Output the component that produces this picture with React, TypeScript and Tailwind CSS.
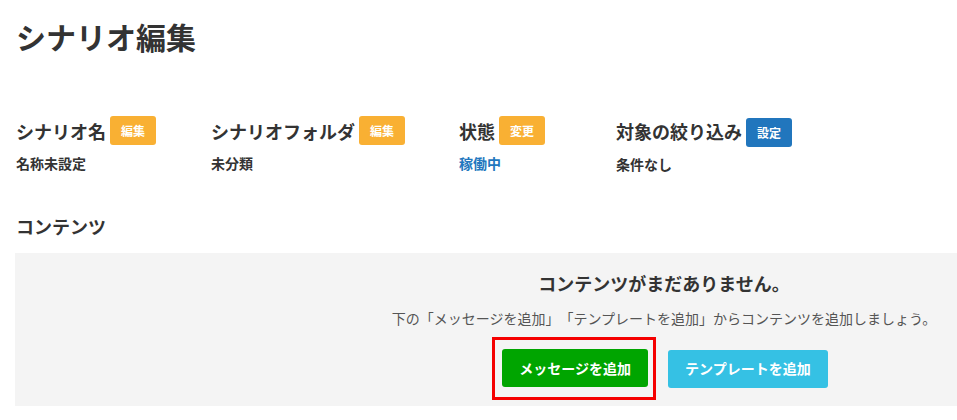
import React from "react";

const font = { fontFamily: '"Noto Sans CJK JP", "Noto Sans", sans-serif' };

function Badge({ label, color, className = "" }: { label: string; color: string; className?: string }) {
  return (
    <span
      className={`inline-flex items-center justify-center w-[46px] h-[29px] rounded-[3px] text-[12px] font-bold text-white ${color} ${className}`}
    >
      {label}
    </span>
  );
}

function Field({
  title,
  badge,
  badgeColor,
  value,
  valueClass,
  width,
  badgeClass = "",
}: {
  title: string;
  badge: string;
  badgeColor: string;
  value: string;
  valueClass: string;
  width: string;
  badgeClass?: string;
}) {
  return (
    <div className={`${width} shrink-0 flex flex-col`}>
      <div className="flex items-center gap-[4px] h-[29px]">
        <span className="text-[18px] font-bold text-[#333] leading-none">{title}</span>
        <Badge label={badge} color={badgeColor} className={badgeClass} />
      </div>
      <div className={`text-[14px] font-bold leading-[20px] ${valueClass}`}>{value}</div>
    </div>
  );
}

export default function App() {
  return (
    <div className="w-[957px] h-[420px] overflow-hidden bg-white" style={font}>
      <div className="pl-[16px]">
        <h1 className="pt-[19px] text-[30px] font-bold leading-[34px] text-[#333]">シナリオ編集</h1>

        <div className="mt-[63px] flex">
          <Field title="シナリオ名" badge="編集" badgeColor="bg-[#f9b033]" value="名称未設定" valueClass="mt-[8px] text-[#333]" width="w-[195px]" />
          <Field title="シナリオフォルダ" badge="編集" badgeColor="bg-[#f9b033]" value="未分類" valueClass="mt-[8px] text-[#333]" width="w-[248px]" />
          <Field title="状態" badge="変更" badgeColor="bg-[#f9b033]" value="稼働中" valueClass="mt-[8px] text-[#2277be]" width="w-[157px]" />
          <Field
            title="対象の絞り込み"
            badge="設定"
            badgeColor="bg-[#2176bd]"
            value="条件なし"
            valueClass="mt-[9px] text-[#333]"
            width="w-[200px]"
            badgeClass="mt-[4px]"
          />
        </div>

        <h2 className="mt-[40px] text-[18px] font-bold leading-[24px] text-[#333]">コンテンツ</h2>

        <div className="mt-[15px] -ml-[1px] w-[1298px] h-[153px] bg-[#f4f4f4] flex flex-col items-center">
          <p className="mt-[17px] text-[18px] font-bold leading-[26px] text-[#333]">コンテンツがまだありません。</p>
          <p className="mt-[12px] text-[14px] leading-[20px] text-[#555] [text-spacing-trim:space-all]">
            下の「メッセージを追加」「テンプレートを追加」からコンテンツを追加しましょう。
          </p>
          <div className="mt-[9px] flex items-center gap-[12px] mr-[8px]">
            <div className="border-[3px] border-[#f50000] pl-[7px] pr-[5px] pt-[9px] pb-[10px]">
              <button className="h-[38px] px-[17px] rounded-[3px] bg-[#00a500] text-white text-[14px] font-bold">
                メッセージを追加
              </button>
            </div>
            <button className="h-[38px] px-[17px] rounded-[3px] bg-[#35c1e4] text-white text-[14px] font-bold">
              テンプレートを追加
            </button>
          </div>
        </div>
      </div>
    </div>
  );
}
